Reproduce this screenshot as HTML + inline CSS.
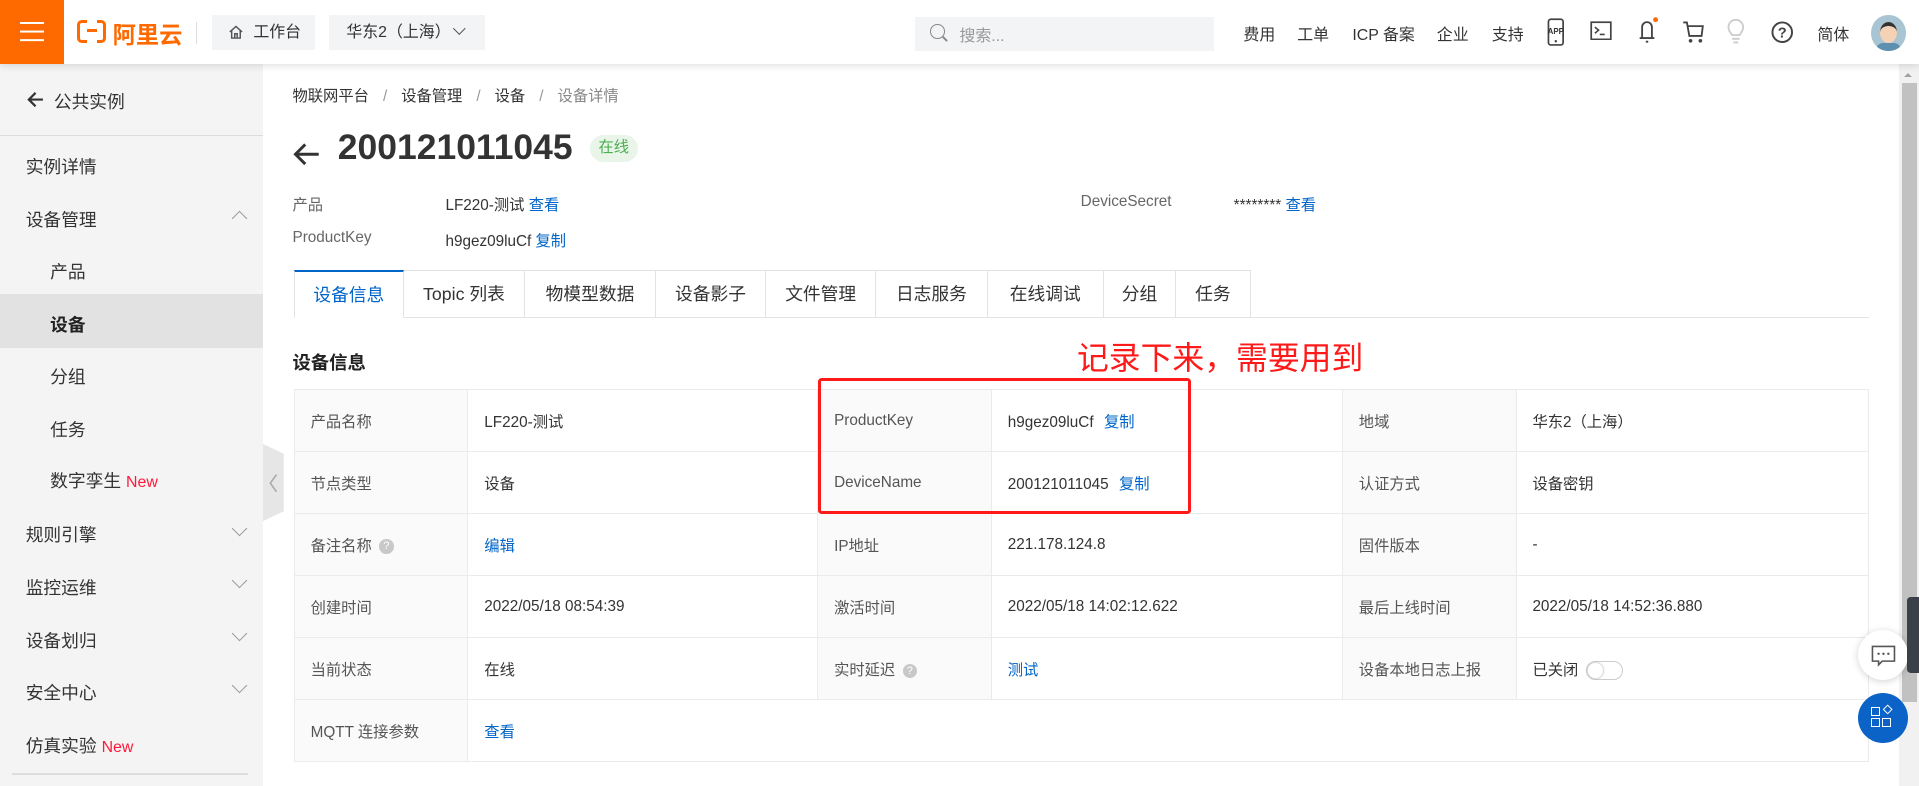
<!DOCTYPE html>
<html><head><meta charset="utf-8"><style>
*{box-sizing:border-box;margin:0;padding:0}
html,body{width:1919px;height:786px;overflow:hidden;background:#fff}
#w{zoom:1.22385;width:1568px;height:642px;position:relative;font-family:"Liberation Sans","Noto Sans CJK SC",sans-serif;color:#333;font-size:13px}
.a{position:absolute;white-space:nowrap}
.top{position:absolute;left:0;top:0;width:1568px;height:52px;background:#fff;box-shadow:0 2px 6px rgba(0,0,0,.12);z-index:5}
.side{position:absolute;left:0;top:52px;width:215px;height:590px;background:#f4f4f4}
.si{position:absolute;font-size:14.5px;color:#333}
.chev{position:absolute;left:191px;width:9px;height:9px;border-right:1.5px solid #999;border-bottom:1.5px solid #999;transform:rotate(45deg)}
.blue{color:#0064c8}
table{position:absolute;left:240px;top:318px;border-collapse:collapse;width:1287px}
td{border:1px solid #ebebeb;height:50.7px;font-size:12.5px;padding:0 0 0 13px;color:#333;vertical-align:middle}
td.l{background:#fafafa;color:#555}
.tabs{position:absolute;left:240px;top:221px;height:39px;display:flex}
.tab{height:39px;border:1px solid #e3e3e3;border-left:none;font-size:14.5px;color:#333;line-height:38px;text-align:center;background:#fff}
.tab:first-child{border-left:1px solid #e3e3e3;border-top:2px solid #0064c8;color:#0064c8;border-bottom-color:#fff}
.q{display:inline-block;width:12px;height:12px;border-radius:50%;background:#c8c8c8;color:#fff;font-size:9px;line-height:12px;text-align:center;vertical-align:middle;margin-left:6px}
</style></head><body><div id="w">
<div class="top">
 <div class="a" style="left:0;top:0;width:52px;height:52px;background:#ff6a00"></div>
 <div class="a" style="left:16px;top:18px;width:20px;height:2px;background:#fff;box-shadow:0 7px 0 #fff,0 14px 0 #fff"></div>
 <div class="a" style="left:63px;top:16px;width:24px;height:19px;border:3px solid #ff6a00;border-radius:4px"></div>
 <div class="a" style="left:71px;top:15px;width:8px;height:21px;background:#fff"></div>
 <div class="a" style="left:71px;top:24px;width:8px;height:2.5px;background:#ff6a00"></div>
 <div class="a" style="left:92px;top:13px;font-size:19px;font-weight:bold;color:#ff6a00">阿里云</div>
 <div class="a" style="left:160px;top:18px;width:1px;height:18px;background:#ddd"></div>
 <div class="a" style="left:173px;top:12px;width:84px;height:29px;background:#f3f4f6;font-size:13px;line-height:29px;padding-left:34px;color:#333">工作台</div>
 <svg class="a" style="left:186px;top:20px" width="13" height="13"><path d="M1.5 6.5L6.5 2L11.5 6.5M3 5.5V11.5H10V5.5M5.5 11.5V8H7.5V11.5" stroke="#555" stroke-width="1.2" fill="none"/></svg>
 <div class="a" style="left:269px;top:12px;width:127px;height:29px;background:#f3f4f6;font-size:13px;line-height:29px;padding-left:14px;color:#333">华东2（上海）</div>
 <div class="a" style="left:372px;top:20px;width:7px;height:7px;border-right:1.3px solid #555;border-bottom:1.3px solid #555;transform:rotate(45deg)"></div>
 <div class="a" style="left:748px;top:14px;width:244px;height:28px;background:#f3f4f6"></div>
 <div class="a" style="left:760px;top:20px;width:12px;height:12px;border:1.5px solid #888;border-radius:50%"></div>
 <div class="a" style="left:770px;top:31px;width:5px;height:1.5px;background:#888;transform:rotate(45deg)"></div>
 <div class="a" style="left:784px;top:19px;font-size:13px;color:#999">搜索...</div>
 <div class="a" style="left:1016px;top:18px;font-size:13px">费用</div>
 <div class="a" style="left:1060px;top:18px;font-size:13px">工单</div>
 <div class="a" style="left:1105px;top:18px;font-size:13px">ICP 备案</div>
 <div class="a" style="left:1174px;top:18px;font-size:13px">企业</div>
 <div class="a" style="left:1219px;top:18px;font-size:13px">支持</div>
 <svg class="a" style="left:1263px;top:15px" width="16" height="24"><rect x="2" y="1" width="12" height="21" rx="2" stroke="#444" stroke-width="1.4" fill="none"/><text x="8" y="13" font-size="6.5" font-weight="bold" text-anchor="middle" fill="#333" font-family="Liberation Sans">APP</text><circle cx="8" cy="19" r="1" fill="#444"/></svg>
 <svg class="a" style="left:1299px;top:17px" width="18" height="16"><rect x="1" y="1" width="16" height="14" stroke="#444" stroke-width="1.4" fill="none"/><path d="M4 5L7 7.5L4 10M8 11H12" stroke="#444" stroke-width="1.3" fill="none"/></svg>
 <svg class="a" style="left:1337px;top:13px" width="20" height="24"><path d="M5 18V9A4 4 0 0 1 13 9V18M3 18H15M8 21H10" stroke="#444" stroke-width="1.5" fill="none"/><circle cx="16" cy="3" r="2" fill="#ff6a00"/></svg>
 <svg class="a" style="left:1374px;top:16px" width="20" height="20"><path d="M1 2H4L6 13H16L17 5H5" stroke="#444" stroke-width="1.5" fill="none"/><circle cx="7" cy="17" r="1.5" fill="#444"/><circle cx="15" cy="17" r="1.5" fill="#444"/></svg>
 <svg class="a" style="left:1410px;top:15px" width="16" height="22"><path d="M5 14C3 11 2 10 2 7.5A6 6 0 0 1 14 7.5C14 10 13 11 11 14Z" stroke="#ccc" stroke-width="1.5" fill="none"/><path d="M5 17H11M6 20H10" stroke="#ccc" stroke-width="1.5"/></svg>
 <svg class="a" style="left:1446px;top:16px" width="20" height="20"><circle cx="10" cy="10" r="8" stroke="#444" stroke-width="1.6" fill="none"/><text x="10" y="14.5" font-size="12" font-weight="bold" text-anchor="middle" fill="#444" font-family="Liberation Sans">?</text></svg>
 <div class="a" style="left:1485px;top:18px;font-size:13px">简体</div>
 <div class="a" style="left:1529px;top:12px;width:28px;height:30px;border-radius:50%;background:#a9c4d3;overflow:hidden"><div style="position:absolute;left:7px;top:6px;width:14px;height:17px;border-radius:50%;background:#f5d1b5;border-top:4px solid #333"></div><div style="position:absolute;left:4px;top:23px;width:20px;height:10px;background:#5c8fb0;border-radius:6px 6px 0 0"></div></div>
</div>
<div class="side">
 <svg class="a" style="left:22px;top:22px" width="14" height="14"><path d="M7 1.5L1.5 7L7 12.5M1.5 7H13" stroke="#333" stroke-width="1.8" fill="none"/></svg>
 <div class="a" style="left:44px;top:20px;font-size:14.5px;color:#333">公共实例</div>
 <div class="a" style="left:0;top:58px;width:215px;height:1px;background:#ddd"></div>
 <div class="si" style="left:21px;top:73px">实例详情</div>
 <div class="si" style="left:21px;top:116px">设备管理</div>
 <div class="chev" style="top:122px;transform:rotate(225deg)"></div>
 <div class="si" style="left:41px;top:159px">产品</div>
 <div class="a" style="left:0;top:188px;width:215px;height:44px;background:#e2e2e2"></div>
 <div class="si" style="left:41px;top:202px;font-weight:bold;color:#222">设备</div>
 <div class="si" style="left:41px;top:245px">分组</div>
 <div class="si" style="left:41px;top:288px">任务</div>
 <div class="si" style="left:41px;top:330px">数字孪生 <span style="color:#ff1a3c;font-size:13px">New</span></div>
 <div class="si" style="left:21px;top:374px">规则引擎</div><div class="chev" style="top:375px"></div>
 <div class="si" style="left:21px;top:417px">监控运维</div><div class="chev" style="top:418px"></div>
 <div class="si" style="left:21px;top:460px">设备划归</div><div class="chev" style="top:461px"></div>
 <div class="si" style="left:21px;top:503px">安全中心</div><div class="chev" style="top:504px"></div>
 <div class="si" style="left:21px;top:546px">仿真实验 <span style="color:#ff1a3c;font-size:13px">New</span></div>
 <div class="a" style="left:10px;top:580px;width:193px;height:1px;background:#ddd"></div>
</div>
<svg class="a" style="left:215px;top:363px" width="17" height="63"><path d="M0 0L17 8V55L0 63Z" fill="#e6e6e6"/><path d="M11 25L6 32L11 39" stroke="#aaa" fill="none" stroke-width="1.3"/></svg>
<div class="a" style="left:1552px;top:52px;width:16px;height:590px;background:#f1f1f1"></div>
<div class="a" style="left:1554px;top:68px;width:12px;height:506px;background:#c1c1c1"></div>
<div class="a" style="left:1556px;top:56px;width:0;height:0;border:4px solid transparent;border-bottom-color:#a3a3a3"></div>
<div class="a" style="left:239px;top:69px;font-size:12.5px;color:#333">物联网平台 <span style="color:#999;margin:0 8px">/</span> 设备管理 <span style="color:#999;margin:0 8px">/</span> 设备 <span style="color:#999;margin:0 8px">/</span> <span style="color:#888">设备详情</span></div>
<svg class="a" style="left:239px;top:116px" width="22" height="20"><path d="M10 2L2 10L10 18M2 10H21" stroke="#333" stroke-width="2.4" fill="none"/></svg>
<div class="a" style="left:276px;top:104px;font-size:29px;font-weight:bold;color:#333">200121011045</div>
<div class="a" style="left:482px;top:110px;width:39px;height:22px;border-radius:11px;background:#e9f5e9;color:#4caf50;font-size:12.5px;line-height:22px;text-align:center">在线</div>
<div class="a" style="left:239px;top:158px;font-size:12.5px;color:#666">产品</div>
<div class="a" style="left:364px;top:158px;font-size:12.5px">LF220-测试 <span class="blue">查看</span></div>
<div class="a" style="left:239px;top:187px;font-size:12.5px;color:#666">ProductKey</div>
<div class="a" style="left:364px;top:187px;font-size:12.5px">h9gez09luCf <span class="blue">复制</span></div>
<div class="a" style="left:883px;top:158px;font-size:12.5px;color:#666">DeviceSecret</div>
<div class="a" style="left:1008px;top:158px;font-size:12.5px">******** <span class="blue">查看</span></div>
<div class="a" style="left:240px;top:259px;width:1287px;height:1px;background:#e3e3e3"></div>
<div class="tabs">
 <div class="tab" style="width:90px">设备信息</div><div class="tab" style="width:99px">Topic 列表</div><div class="tab" style="width:107px">物模型数据</div><div class="tab" style="width:90px">设备影子</div><div class="tab" style="width:90px">文件管理</div><div class="tab" style="width:91px">日志服务</div><div class="tab" style="width:95px">在线调试</div><div class="tab" style="width:59px">分组</div><div class="tab" style="width:61px">任务</div>
</div>
<div class="a" style="left:239px;top:285px;font-size:15px;font-weight:bold;color:#222">设备信息</div>
<div class="a" style="left:880px;top:272px;font-size:26px;color:#ff1a1a">记录下来，需要用到</div>
<table>
<colgroup><col style="width:142px"><col style="width:286px"><col style="width:142px"><col style="width:287px"><col style="width:142px"><col style="width:288px"></colgroup>
<tr><td class="l">产品名称</td><td>LF220-测试</td><td class="l">ProductKey</td><td>h9gez09luCf <span class="blue" style="margin-left:5px">复制</span></td><td class="l">地域</td><td>华东2（上海）</td></tr>
<tr><td class="l">节点类型</td><td>设备</td><td class="l">DeviceName</td><td>200121011045 <span class="blue" style="margin-left:5px">复制</span></td><td class="l">认证方式</td><td>设备密钥</td></tr>
<tr><td class="l">备注名称<span class="q">?</span></td><td class="blue">编辑</td><td class="l">IP地址</td><td>221.178.124.8</td><td class="l">固件版本</td><td>-</td></tr>
<tr><td class="l">创建时间</td><td>2022/05/18 08:54:39</td><td class="l">激活时间</td><td>2022/05/18 14:02:12.622</td><td class="l">最后上线时间</td><td>2022/05/18 14:52:36.880</td></tr>
<tr><td class="l">当前状态</td><td>在线</td><td class="l">实时延迟<span class="q">?</span></td><td class="blue">测试</td><td class="l">设备本地日志上报</td><td>已关闭 <span style="display:inline-block;width:30px;height:16px;border:1px solid #ccc;border-radius:8px;vertical-align:middle;margin-left:3px;position:relative"><span style="position:absolute;left:1px;top:1px;width:12px;height:12px;border-radius:50%;background:#fff;box-shadow:0 0 2px #999"></span></span></td></tr>
<tr><td class="l">MQTT 连接参数</td><td class="blue" colspan="5">查看</td></tr>
</table>
<div class="a" style="left:668px;top:309px;width:305px;height:111px;border:2.5px solid #ff1a1a;border-radius:3px"></div>
<div class="a" style="left:1518px;top:515px;width:41px;height:41px;border-radius:50%;background:#fff;box-shadow:0 1px 6px rgba(0,0,0,.18)"></div>
<svg class="a" style="left:1528px;top:526px" width="22" height="20"><path d="M2 2H20V14H10L7 17V14H2Z" stroke="#555" stroke-width="1.3" fill="none"/><circle cx="7" cy="8" r="1" fill="#555"/><circle cx="11" cy="8" r="1" fill="#555"/><circle cx="15" cy="8" r="1" fill="#555"/></svg>
<div class="a" style="left:1518px;top:566px;width:41px;height:41px;border-radius:50%;background:#0b63c8"></div>
<div class="a" style="left:1529px;top:578px;width:7px;height:7px;border:1.2px solid #fff"></div>
<div class="a" style="left:1529px;top:587px;width:7px;height:7px;border:1.2px solid #fff"></div>
<div class="a" style="left:1538px;top:587px;width:7px;height:7px;border:1.2px solid #fff"></div>
<div class="a" style="left:1539px;top:577px;width:6px;height:6px;border:1.2px solid #fff;transform:rotate(45deg)"></div>
<div class="a" style="left:1558px;top:488px;width:10px;height:62px;background:#3b4048;border-radius:3px 0 0 3px"></div>
</div></body></html>
